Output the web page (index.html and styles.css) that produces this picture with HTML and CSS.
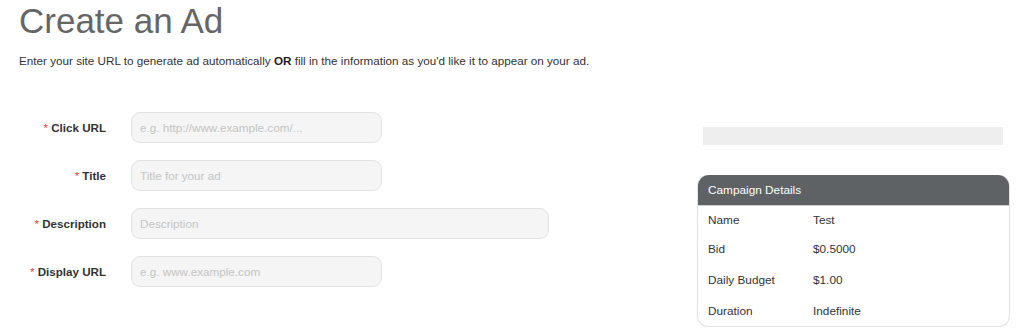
FILE: index.html
```
<!DOCTYPE html>
<html lang="en">

<head>
    <link rel="stylesheet" href="styles.css">
</head>

<body>
    <section class="page">
        <h1 class="page-title">Create an Ad</h1>
        <p class="intro">Enter your site URL to generate ad automatically <strong>OR</strong> fill in the information as you'd like it to appear on your ad.</p>

        <div class="columns">
            <form class="ad-form">
                <div class="row">
                    <label><span class="req">*</span> Click URL</label>
                    <input type="text" class="short" placeholder="e.g. http://www.example.com/...">
                </div>
                <div class="row">
                    <label><span class="req">*</span> Title</label>
                    <input type="text" class="short" placeholder="Title for your ad">
                </div>
                <div class="row">
                    <label><span class="req">*</span> Description</label>
                    <input type="text" class="long" placeholder="Description">
                </div>
                <div class="row">
                    <label><span class="req">*</span> Display URL</label>
                    <input type="text" class="short" placeholder="e.g. www.example.com">
                </div>
            </form>

            <aside class="sidebar">
                <div class="preview-bar"></div>
                <div class="campaign">
                    <div class="campaign-head">Campaign Details</div>
                    <div class="campaign-row first"><span>Name</span><span>Test</span></div>
                    <div class="campaign-row"><span>Bid</span><span>$0.5000</span></div>
                    <div class="campaign-row"><span>Daily Budget</span><span>$1.00</span></div>
                    <div class="campaign-row"><span>Duration</span><span>Indefinite</span></div>
                </div>
            </aside>
        </div>
    </section>
</body>

</html>
```

FILE: styles.css
```
body {
    margin: 0;
    background: #ffffff;
    font-family: "Liberation Sans", Arial, sans-serif;
    color: #333333;
}

.page {
    padding: 0 14px 0 19px;
}

.page-title {
    font-size: 35px;
    font-weight: normal;
    color: #666666;
    margin: 0;
    padding-top: 2px;
    line-height: 38px;
}

.intro {
    font-size: 11.7px;
    margin: 14px 0 0;
    line-height: 14px;
}

.intro strong {
    color: #222222;
}

.columns {
    display: flex;
    justify-content: space-between;
    align-items: flex-start;
}

.ad-form {
    display: grid;
    align-content: start;
    gap: 17px;
    padding-top: 44px;
}

.row {
    display: flex;
    align-items: center;
    gap: 25px;
}

.row label {
    width: 87px;
    text-align: right;
    font-size: 11.6px;
    font-weight: bold;
    color: #333333;
}

.req {
    color: #e0433a;
    font-weight: normal;
}

.row input {
    box-sizing: border-box;
    height: 31px;
    padding: 0 8px;
    border: 1px solid #e3e3e3;
    border-radius: 9px;
    background: #f5f5f5;
    font-family: "Liberation Sans", Arial, sans-serif;
    font-size: 11.7px;
    outline: none;
}

.row input::placeholder {
    color: #c4c4c4;
}

.short {
    width: 251px;
}

.long {
    width: 418px;
}

.sidebar {
    width: 313px;
    padding-top: 59px;
}

.preview-bar {
    height: 18px;
    margin: 0 7px 0 6px;
    background: #eeeeee;
}

.campaign {
    margin-top: 30px;
    border: 1px solid #e2e2e2;
    border-top: none;
    border-radius: 11px;
    font-size: 11.8px;
}

.campaign-head {
    height: 30px;
    line-height: 30px;
    padding-left: 10px;
    background: #5e6265;
    color: #ffffff;
    border-radius: 11px 11px 0 0;
    border-bottom: 1px solid #d0d0d0;
}

.campaign-row {
    display: flex;
    align-items: center;
    height: 31px;
    padding-left: 10px;
    color: #333333;
}

.campaign-row.first {
    height: 27px;
}

.campaign-row span:first-child {
    width: 105px;
}
```
